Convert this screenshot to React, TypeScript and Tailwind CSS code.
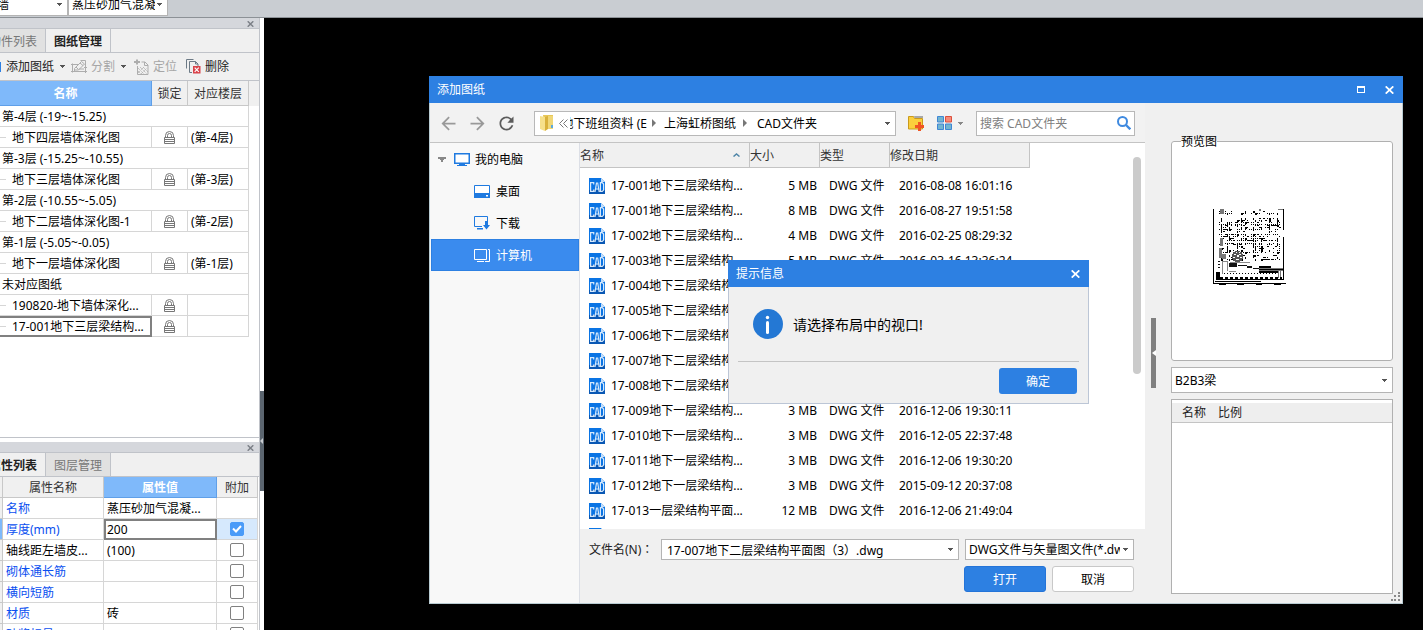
import React from "react";
import { MdArrowBack, MdArrowForward, MdRefresh } from "react-icons/md";

type IconProps = { className?: string };

function Caret({ className = "text-[#555]" }: IconProps) {
  return (
    <svg className={"shrink-0 " + className} width="5" height="3" viewBox="0 0 5 3" fill="currentColor" shapeRendering="crispEdges" aria-hidden="true">
      <path d="M0 0h5v1H0zM1 1h3v1H1zM2 2h1v1H2z" />
    </svg>
  );
}

function Chevron() {
  return (
    <svg className="shrink-0" width="4" height="8" viewBox="0 0 4 8" fill="#777" aria-hidden="true">
      <path d="M0 0l4 4-4 4z" />
    </svg>
  );
}

function SmallClose() {
  return (
    <svg width="7" height="6" viewBox="0 0 7 6" stroke="#7c8087" strokeWidth="1.5" aria-hidden="true">
      <path d="M.7 .3L6.3 5.7M6.3 .3L.7 5.7" />
    </svg>
  );
}

function CloseIcon() {
  return (
    <svg width="9" height="8" viewBox="0 0 9 8" stroke="#fff" strokeWidth="1.8" aria-hidden="true">
      <path d="M.7 .4l7.6 7.2M8.3 .4L.7 7.6" />
    </svg>
  );
}

function LockIcon() {
  return (
    <svg className="mx-auto block" width="11" height="13" viewBox="0 0 11 13" fill="none" stroke="#777" aria-hidden="true">
      <path d="M1.500 6V4.500A4 4 0 0 1 5.500 .5A4 4 0 0 1 9.500 4.500V6M3.500 6V4.500A2 2 0 0 1 7.500 4.500V6" />
      <path d="M.5 6.500h10v6H.5zM.5 8.500h10M.5 10.500h10" />
    </svg>
  );
}

function SplitIcon() {
  return (
    <svg width="16" height="15" viewBox="0 0 16 15" fill="none" stroke="#adadad" aria-hidden="true">
      <path d="M1.500 4.500v9M0 12.500h16M14.500 4v10M1 5.500h6M3.500 9.500l7-7 3 2.500-6 6h-4zM5 8l2.500 2.500M9 4l3 2.500M9.500 1.500h5v3" />
      <path d="M3.500 10v2M8 10h5M0 5.500h2M13 8.500h3" />
    </svg>
  );
}

function LocateIcon() {
  return (
    <svg width="15" height="16" viewBox="0 0 15 16" fill="none" stroke="#adadad" aria-hidden="true">
      <path d="M3 .5v5M0 3h6" strokeWidth="2" />
      <path d="M3.500 7v8.500h10.500V6l-3-3H7.500M10.500 3v3.500H14" />
      <path d="M4 9l6 6M4 12l3 3M6 8l7 7M9 8l5 5M4 14l6-6M7 15l6-6" strokeDasharray="1 1" />
    </svg>
  );
}

function DeleteIcon() {
  return (
    <svg width="15" height="15" viewBox="0 0 15 15" fill="none" stroke="#6c7a86" aria-hidden="true">
      <path d="M.5 9.500V.5h7M6 13.500H3.500V2.500h6l2.500 2.500v2M9.500 2.500V5H12" />
      <path d="M7 7h7.500v7.500H7z" fill="#d9434a" stroke="none" />
      <path d="M8.700 8.700l4.100 4.100M12.800 8.700l-4.100 4.100" stroke="#fff" strokeWidth="1.200" />
    </svg>
  );
}

function ComputerIcon() {
  return (
    <svg width="16" height="13" viewBox="0 0 16 13" aria-hidden="true">
      <path d="M.75 .75h14.500v9.500H.75z" fill="#fff" stroke="#1f7ae0" strokeWidth="1.500" />
      <path d="M5 11h6v1h2v1H3v-1h2z" fill="#1f7ae0" />
    </svg>
  );
}

function DesktopIcon() {
  return (
    <svg width="16" height="13" viewBox="0 0 16 13" aria-hidden="true">
      <path d="M.5 .5h15v12H.5z" fill="#fff" stroke="#1f7ae0" />
      <path d="M0 8h16v5H0z" fill="#1f7ae0" />
      <path d="M12 10h2v1.500h-2z" fill="#fff" />
    </svg>
  );
}

function DownloadIcon() {
  return (
    <svg width="16" height="14" viewBox="0 0 16 14" aria-hidden="true">
      <path d="M8 10.500H.5V.5h13V5" fill="none" stroke="#1f7ae0" />
      <path d="M3 12h6v1.500H3zM11 5h3v4h2l-3.500 4.500L9 9h2z" fill="#1f7ae0" />
    </svg>
  );
}

function MachineIcon() {
  return (
    <svg width="16" height="13" viewBox="0 0 16 13" fill="none" stroke="#fff" aria-hidden="true">
      <path d="M.5 .5h12v10H.5zM14 .5h1.500v12H11M3 12.500h7" />
    </svg>
  );
}

function FolderIcon() {
  return (
    <svg width="14" height="16" viewBox="0 0 14 16" aria-hidden="true">
      <path d="M3 0h10v14H5z" fill="#e8c757" />
      <path d="M0 1l5 1v14l-5-2z" fill="#f6e08a" />
      <path d="M5 2l3-1v13l-3 2z" fill="#d9b13b" />
      <path d="M8 1h5v13H8z" fill="#f0d778" />
      <path d="M11 10h2v3h-2z" fill="#5aa9dc" />
    </svg>
  );
}

function NewFolderIcon() {
  return (
    <svg width="16" height="15" viewBox="0 0 16 15" aria-hidden="true">
      <path d="M.5 .5h5l1 2h8v10.500H.5z" fill="#fbcf3c" stroke="#c99a1c" />
      <path d="M6 0h9v2H6.500z" fill="#a8a8a8" />
      <path d="M10 6h3v3h3v3h-3v3h-3v-3H7V9h3z" fill="#f05423" />
    </svg>
  );
}

function ViewIcon() {
  return (
    <svg width="15" height="14" viewBox="0 0 15 14" aria-hidden="true">
      <g fill="#72b5cf" stroke="#3f86d4">
        <path d="M.5 .5h6v5.500h-6zM.5 8h6v5.500h-6zM8.500 8h6v5.500h-6z" />
      </g>
      <path d="M8.500 .5h6v5.500h-6z" fill="#f58b7a" stroke="#dc4f3c" />
    </svg>
  );
}

function SearchIcon() {
  return (
    <svg width="14" height="14" viewBox="0 0 14 14" fill="none" stroke="#3f8ae0" aria-hidden="true">
      <circle cx="5.500" cy="5.500" r="4.500" strokeWidth="2" />
      <path d="M9 9l4.300 4.300" strokeWidth="2.400" />
    </svg>
  );
}

function CadIcon() {
  return (
    <svg className="block" width="16" height="16" viewBox="0 0 16 16" fill="none" aria-hidden="true">
      <path d="M0 0h12l4 4v12H0z" fill="#0a74e4" />
      <path d="M0 12h16v4H0z" fill="#0a58b4" />
      <path d="M12 0l4 4h-4z" fill="#c3defa" />
      <g stroke="#d6e9fc" strokeWidth="1.200">
        <path d="M4.700 6.500V4.600H1.600v8.800h3.100v-2M6 14l1.500-9h1.200l1.500 9M6.500 11h3.200M11.400 4.600h1.800l1.400 1.500v6l-1.400 1.300h-1.800z" />
      </g>
    </svg>
  );
}

function InfoIcon() {
  return (
    <svg className="shrink-0" width="30" height="30" viewBox="0 0 30 30" aria-hidden="true">
      <circle cx="15" cy="15" r="15" fill="#2478d4" />
      <circle cx="14.500" cy="8.500" r="1.700" fill="#fff" />
      <path d="M14.500 13.500v10" stroke="#fff" strokeWidth="3" strokeLinecap="round" />
    </svg>
  );
}

/* Thumbnail of the selected drawing: a grid of beams inside a sheet frame.
   Each pair is [y, density out of 12]. */
const beamRows: [number, number][] = [
  [2, 5], [4, 6], [9, 4], [11, 4], [13, 8], [15, 10], [16, 5], [18, 6], [20, 9], [22, 4], [25, 10],
  [27, 8], [29, 7], [31, 9], [34, 10], [35, 6], [37, 5], [39, 6], [41, 8], [43, 9], [46, 4], [48, 5], [50, 6],
];

function beamPath(): string {
  let d = "";
  let seed = 7;
  for (const [y, density] of beamRows) {
    for (let x = 6; x < 67; x += 2) {
      seed = (seed * 16807) % 2147483647;
      const value = (seed / 2147483647) * 12;
      const onAxis = x % 8 === 0 || x % 14 === 0;
      if (value < density * (onAxis ? 1.2 : 0.8)) {
        const w = value < 1.5 ? 2 : 1;
        const h = onAxis && value < 5 ? 2 : 1;
        d += "M" + x + " " + y + "h" + w + "v" + h + "h-" + w + "z";
      }
    }
  }
  return d;
}

function DrawingPreview() {
  return (
    <svg width="73" height="76" viewBox="0 0 73 76" shapeRendering="crispEdges" role="img" aria-label="预览图">
      <path d={beamPath()} fill="#000" />
      <path d="M7 0h4v5H7zM46 0h2v2h-2zM65 0h5v1h-5zM7 29h3v8H7zM6 39h3v10H6zM9 45h4v5H9z" fill="#777" />
      <path d="M8 52h62v15H8z" fill="#fff" />
      <path d="M22 42h5v1h2v2h1v5h-1v2h-2v1h-5v-1h-2v-2h-1v-5h1v-2h2z" fill="#555" />
      <path d="M23 43h1v1h-1zM26 43h1v1h-1zM21 45h2v1h-2zM26 45h2v1h-2zM24 46h2v2h-2zM20 48h2v1h-2zM27 48h2v1h-2zM23 50h3v1h-3z" fill="#fff" />
      <path d="M9.500 52v12.500M14.500 52v10M9 52.500h6M17 53.500h20M23 62.500h-7" stroke="#888" fill="none" />
      <path d="M16 54h8v4h-8zM25 56h9v1h-9zM34 57h5v2h-5zM40 59h6v1h-6zM5 52h2v1H5zM5 55h2v1H5zM5 58h2v1H5z" fill="#111" />
      <path d="M46 57h12v2H46zM46 60h24v1H46zM46 62h20v2H46z" fill="#000" />
      <path d="M58 59h12v1H58zM46 59h12v1H46zM46 61h24v1H46zM65 62h1v7h-1zM67 62h1v7h-1z" fill="#777" />
      <path d="M11 64.500h54" stroke="#000" strokeDasharray="1 2" />
      <path d="M0 0h1v75H0zM70 0h1v21h-1zM70 28h1v43h-1zM0 74h73v1H0zM2 72h46v1H2zM3 63h4v8H3zM5 70h66v1H5z" fill="#000" />
      <path d="M7 69h62" stroke="#000" strokeWidth="2" strokeDasharray="3 2" />
      <path d="M6 75h7v1H6zM24 75h7v1h-7zM43 75h6v1h-6zM61 75h7v1h-7z" fill="#000" />
    </svg>
  );
}

type SelectProps = { label: string; value: string; className: string; textClass: string };

function SelectBox({ label, value, className, textClass }: SelectProps) {
  return (
    <label className={"relative flex items-center border border-[#b4b4b4] bg-white " + className}>
      <select aria-label={label} className={"h-full w-full appearance-none overflow-hidden bg-transparent text-black outline-none " + textClass}>
        <option>{value}</option>
      </select>
      <span className="pointer-events-none absolute right-[5px]">
        <Caret />
      </span>
    </label>
  );
}

type Drawing = { name: string; floor?: string; group?: boolean; selected?: boolean };

const drawings: Drawing[] = [
  { name: "第-4层 (-19~-15.25)", group: true },
  { name: "地下四层墙体深化图", floor: "(第-4层)" },
  { name: "第-3层 (-15.25~-10.55)", group: true },
  { name: "地下三层墙体深化图", floor: "(第-3层)" },
  { name: "第-2层 (-10.55~-5.05)", group: true },
  { name: "地下二层墙体深化图-1", floor: "(第-2层)" },
  { name: "第-1层 (-5.05~-0.05)", group: true },
  { name: "地下一层墙体深化图", floor: "(第-1层)" },
  { name: "未对应图纸", group: true },
  { name: "190820-地下墙体深化..." },
  { name: "17-001地下三层梁结构...", selected: true },
];

type Property = { name: string; value: string; checked?: boolean; plain?: boolean; noCheck?: boolean };

const properties: Property[] = [
  { name: "名称", value: "蒸压砂加气混凝...", noCheck: true },
  { name: "厚度(mm)", value: "200", checked: true },
  { name: "轴线距左墙皮...", value: "(100)", plain: true },
  { name: "砌体通长筋", value: "" },
  { name: "横向短筋", value: "" },
  { name: "材质", value: "砖" },
  { name: "砂浆标号", value: "" },
];

const files = [
  ["17-001地下三层梁结构...", "5 MB", "2016-08-08 16:01:16"],
  ["17-001地下三层梁结构...", "8 MB", "2016-08-27 19:51:58"],
  ["17-002地下三层梁结构...", "4 MB", "2016-02-25 08:29:32"],
  ["17-003地下三层梁结构...", "5 MB", "2016-03-16 13:36:24"],
  ["17-004地下三层梁结构...", "", ""],
  ["17-005地下二层梁结构...", "", ""],
  ["17-006地下二层梁结构...", "", ""],
  ["17-007地下二层梁结构...", "", ""],
  ["17-008地下二层梁结构...", "", ""],
  ["17-009地下一层梁结构...", "3 MB", "2016-12-06 19:30:11"],
  ["17-010地下一层梁结构...", "3 MB", "2016-12-05 22:37:48"],
  ["17-011地下一层梁结构...", "3 MB", "2016-12-06 19:30:20"],
  ["17-012地下一层梁结构...", "3 MB", "2015-09-12 20:37:08"],
  ["17-013一层梁结构平面...", "12 MB", "2016-12-06 21:49:04"],
  ["", "", ""],
];

function DockHeader() {
  return (
    <div className="flex h-[11px] shrink-0 items-end justify-end border-b border-[#c0c3c9] bg-[#d5d7dc] pr-[5px]">
      <button type="button" aria-label="关闭面板" className="flex h-2 items-center">
        <SmallClose />
      </button>
    </div>
  );
}

type TabsProps = { first: string; second: string; active: 0 | 1 };

function DockTabs({ first, second, active }: TabsProps) {
  const on = "bg-[#f0f0f0] font-bold text-[#222]";
  const off = "bg-[#e1e1e1] text-[#777]";
  return (
    <div className="flex h-6 shrink-0 border-b border-[#c0c3c9] bg-[#f0f0f0]" role="tablist">
      <button type="button" role="tab" aria-selected={active === 0} className={"flex w-[46px] items-center justify-end overflow-hidden whitespace-nowrap border-r border-[#c0c3c9] pr-2 pt-px " + (active === 0 ? on : off)}>
        {first}
      </button>
      <button type="button" role="tab" aria-selected={active === 1} className={"flex w-[65px] items-center justify-center whitespace-nowrap border-r border-[#c0c3c9] pt-px " + (active === 1 ? on : off)}>
        {second}
      </button>
    </div>
  );
}

function DrawingsPanel() {
  return (
    <section className="flex h-[420px] shrink-0 flex-col border-b border-[#c0c3c9]">
      <DockHeader />
      <DockTabs first="构件列表" second="图纸管理" active={1} />
      <div className="flex h-[28px] shrink-0 items-center border-b border-[#c0c3c9] bg-[#f0f0f0] text-[#222]">
        <button type="button" className="flex items-center">
          <span className="h-2.5 w-px bg-[#2d80e2]" />
          <span className="ml-[5px] mr-1.5">添加图纸</span>
          <Caret />
        </button>
        <button type="button" className="ml-1.5 flex items-center text-[#a6a6a6]">
          <SplitIcon />
          <span className="ml-1 mr-1.5">分割</span>
          <Caret />
        </button>
        <button type="button" className="ml-2 flex items-center gap-1 text-[#a6a6a6]">
          <LocateIcon />
          定位
        </button>
        <button type="button" className="ml-[9px] flex items-center gap-1">
          <DeleteIcon />
          删除
        </button>
      </div>
      <table className="w-full table-fixed border-separate border-spacing-0">
        <colgroup>
          <col className="w-[152px]" />
          <col className="w-[36px]" />
          <col className="w-[61px]" />
          <col />
        </colgroup>
        <thead>
          <tr className="h-[25px] bg-[#f0f0f0] text-[#333]">
            <th className="border-b border-r border-[#5f9fe8] bg-[#7fb9fa] pr-5 text-center font-bold text-white">名称</th>
            <th className="border-b border-r border-[#c8c8c8] p-0 text-center font-normal">锁定</th>
            <th className="border-b border-r border-[#c8c8c8] p-0 text-center font-normal">对应楼层</th>
            <td />
          </tr>
        </thead>
        <tbody>
          {drawings.map((d) =>
            d.group ? (
              <tr key={d.name} className="h-[21px]">
                <td colSpan={3} className="border-b border-r border-[#d6d6d6] pl-0.5">{d.name}</td>
                <td />
              </tr>
            ) : (
              <tr key={d.name} className="h-[21px]">
                <td className={"whitespace-nowrap " + (d.selected ? "border-2 border-l-0 border-[#808080]" : "border-b border-r border-[#d6d6d6]")}>
                  <span className="flex items-center gap-1.5">
                    <span className="h-px w-1.5 bg-[#d6d6d6]" />
                    {d.name}
                  </span>
                </td>
                <td className="border-b border-r border-[#d6d6d6]"><LockIcon /></td>
                <td className="border-b border-r border-[#d6d6d6] pl-[3px]">{d.floor}</td>
                <td />
              </tr>
            )
          )}
        </tbody>
      </table>
    </section>
  );
}

function PropertiesPanel() {
  return (
    <section className="mt-1 flex min-h-0 flex-1 flex-col overflow-hidden">
      <DockHeader />
      <DockTabs first="属性列表" second="图层管理" active={0} />
      <div className="min-h-0 flex-1 overflow-hidden">
        <table className="w-[258px] table-fixed border-separate border-spacing-0">
          <colgroup>
            <col className="w-[3px]" />
            <col className="w-[101px]" />
            <col className="w-[113px]" />
            <col />
          </colgroup>
          <thead>
            <tr className="h-[21px] bg-[#f0f0f0] text-[#333]">
              <td className="border-b border-r border-[#c8c8c8]" />
              <th className="border-b border-r border-[#c8c8c8] p-0 text-center font-normal">属性名称</th>
              <th className="border-b border-r border-[#5f9fe8] bg-[#7fb9fa] p-0 text-center font-bold text-white">属性值</th>
              <th className="border-b border-r border-[#c8c8c8] p-0 text-center font-normal">附加</th>
            </tr>
          </thead>
          <tbody>
            {properties.map((p) => (
              <tr key={p.name} className="h-[21px]">
                <td className={"border-b border-r border-[#c8c8c8] " + (p.checked ? "bg-[#7fb9fa]" : "bg-[#f0f0f0]")} />
                <td className={"whitespace-nowrap border-b border-r border-[#d6d6d6] pl-[3px] " + (p.plain ? "text-black" : "text-[#0a4ff0]")}>{p.name}</td>
                <td className={"whitespace-nowrap " + (p.checked ? "border-2 border-[#808080] pl-px" : "border-b border-r border-[#d6d6d6] pl-[3px]")}>{p.value}</td>
                <td className={"border-b border-r border-[#d6d6d6] " + (p.checked ? "bg-[#d6e9fd]" : "")}>
                  {!p.noCheck && (
                    <label className="relative mx-auto flex h-3.5 w-3.5 items-center justify-center">
                      <input type="checkbox" defaultChecked={p.checked} aria-label={p.name} className="peer h-3.5 w-3.5 appearance-none rounded-xs border border-[#808080] bg-white checked:border-[#4a9bf8] checked:bg-[#4a9bf8]" />
                      <svg className="pointer-events-none absolute hidden peer-checked:block" width="10" height="8" viewBox="0 0 10 8" fill="none" stroke="#fff" strokeWidth="2" aria-hidden="true">
                        <path d="M1 3.500l3 3L9 1" />
                      </svg>
                    </label>
                  )}
                </td>
              </tr>
            ))}
          </tbody>
        </table>
      </div>
    </section>
  );
}

function PlacesNav() {
  const item = "flex h-8 w-full items-center gap-1.5 pl-[43px]";
  return (
    <nav className="w-[150px] shrink-0 border-r border-[#dcdfe6] bg-[#f8f8f8] pl-px text-black">
      <button type="button" className="flex h-8 w-full items-center pl-[7px]">
        <Caret className="h-[5px] w-2 text-[#888]" />
        <span className="ml-2 mr-[5px]"><ComputerIcon /></span>
        我的电脑
      </button>
      <button type="button" className={item}><DesktopIcon />桌面</button>
      <button type="button" className={item}><DownloadIcon />下载</button>
      <button type="button" className={item + " bg-[#3a8bee] text-white inset-ring inset-ring-[#2d80e2]"}><MachineIcon />计算机</button>
    </nav>
  );
}

function FileList() {
  const head = "border-b border-r border-[#c4c4c4] bg-[#f0f0f0] p-0 text-left font-normal text-[#333]";
  return (
    <div className="flex min-h-0 flex-1 justify-between overflow-hidden bg-white">
      <table className="w-[450px] table-fixed self-start border-separate border-spacing-0">
        <colgroup>
          <col className="w-[170px]" />
          <col className="w-[70px]" />
          <col className="w-[70px]" />
          <col className="w-[140px]" />
        </colgroup>
        <thead>
          <tr className="h-[25px]">
            <th className={head}>
              <span className="flex items-center justify-between pr-[9px]">
                名称
                <svg width="7" height="4" viewBox="0 0 7 4" fill="none" stroke="#4f86a8" strokeWidth="1.500" aria-hidden="true"><path d="M.5 3.500l3-2.500 3 2.500" /></svg>
              </span>
            </th>
            <th className={head}>大小</th>
            <th className={head}>类型</th>
            <th className={head}>修改日期</th>
          </tr>
        </thead>
        <tbody className="before:block before:h-[5px] before:content-['']">
          {files.map((f, i) => (
            <tr key={i} className="h-[25px] whitespace-nowrap">
              <td className="p-0 pl-[9px]">
                <span className="flex items-center gap-1.5"><CadIcon />{f[0]}</span>
              </td>
              <td className="p-0 pr-[3px] text-right">{f[1]}</td>
              <td className="p-0 pl-[9px]">{f[1] && "DWG 文件"}</td>
              <td className="p-0 pl-[9px]">{f[2]}</td>
            </tr>
          ))}
        </tbody>
      </table>
      <div className="mr-1 mt-3.5 h-[217px] w-2 rounded-full bg-[#cbcbcb]" />
    </div>
  );
}

function DialogToolbar() {
  return (
    <div className="flex h-10 shrink-0 items-center border-b border-[#c4c4c4] bg-[#f2f2f2] pl-2 pt-px">
      <div className="flex gap-2 text-[#999]">
        <button type="button" aria-label="后退"><MdArrowBack size={21} /></button>
        <button type="button" aria-label="前进"><MdArrowForward size={21} /></button>
        <button type="button" aria-label="刷新" className="text-[#5c5c5c]"><MdRefresh size={21} /></button>
      </div>
      <div className="ml-[17px] flex h-[25px] min-w-0 flex-1 items-center border border-[#b8b8b8] bg-white pl-[5px] pr-[5px] text-black">
        <FolderIcon />
        <svg className="ml-[5px] shrink-0" width="9" height="9" viewBox="0 0 9 9" fill="none" stroke="#777" aria-hidden="true">
          <path d="M4.500 .5l-4 4 4 4M8.500 .5l-4 4 4 4" />
        </svg>
        <span className="ml-0.5 flex w-[77px] justify-end overflow-hidden whitespace-nowrap">地下班组资料 (E</span>
        <span className="ml-[5px]"><Chevron /></span>
        <span className="ml-2 whitespace-nowrap">上海虹桥图纸</span>
        <span className="ml-[7px]"><Chevron /></span>
        <span className="ml-[10px] flex-1 whitespace-nowrap">CAD文件夹</span>
        <Caret />
      </div>
      <button type="button" aria-label="新建文件夹" className="ml-3"><NewFolderIcon /></button>
      <button type="button" aria-label="视图" className="ml-[13px] flex items-center gap-1.5"><ViewIcon /><Caret className="text-[#888]" /></button>
      <label className="ml-[13px] mr-[10px] flex h-[25px] w-[159px] items-center border border-[#b8b8b8] bg-white pl-[3px] pr-[3px]">
        <input type="text" aria-label="搜索" placeholder="搜索 CAD文件夹" className="min-w-0 flex-1 bg-transparent outline-none placeholder:text-[#808080]" />
        <SearchIcon />
      </label>
    </div>
  );
}

function DialogFooter() {
  return (
    <div className="h-[74px] shrink-0 pl-[9px] pr-[11px] pt-2.5">
      <div className="flex items-center">
        <label htmlFor="file-name" className="w-[72px] whitespace-nowrap text-[#222]">
          文件名(N)<span className="font-['Noto_Sans_CJK_TC',sans-serif] leading-4">：</span>
        </label>
        <div className="relative flex h-[21px] min-w-0 flex-1 items-center border border-[#b4b4b4] bg-white">
          <input id="file-name" type="text" defaultValue="17-007地下二层梁结构平面图（3）.dwg" className="h-full w-full bg-transparent pl-[5px] text-black outline-none" />
          <span className="absolute right-[5px]"><Caret /></span>
        </div>
        <SelectBox label="文件类型" value="DWG文件与矢量图文件(*.dwg)" className="ml-[6px] h-[21px] w-[169px]" textClass="pl-[3px] pr-[13px]" />
      </div>
      <div className="mt-1.5 flex justify-end gap-1.5">
        <button type="button" className="h-[26px] w-[82px] rounded-[3px] border border-[#2474d8] bg-[#2d80e2] pt-px text-white">打开</button>
        <button type="button" className="h-[26px] w-[82px] rounded-[3px] border border-[#c8c8c8] bg-white pt-px text-black">取消</button>
      </div>
    </div>
  );
}

function PreviewPane() {
  return (
    <aside className="relative flex w-[257px] shrink-0 bg-[#f0f0f0] pb-[9px] pl-1.5 pr-[9px] pt-[30px]">
      <button type="button" aria-label="折叠预览" className="mt-[185px] flex h-[70px] w-[5px] items-center justify-center bg-[#808080]">
        <svg width="4" height="6" viewBox="0 0 4 6" fill="#fff" aria-hidden="true"><path d="M4 0v6L0 3z" /></svg>
      </button>
      <div className="ml-[15px] flex min-w-0 flex-1 flex-col gap-1.5">
        <fieldset className="h-[228px] rounded-[3px] border border-[#b0b0b0] bg-white pl-[9px]">
          <legend className="h-4 text-black">预览图</legend>
          <div className="pl-8 pt-[60px]"><DrawingPreview /></div>
        </fieldset>
        <SelectBox label="布局" value="B2B3梁" className="h-[26px]" textClass="pl-[3px] pt-px" />
        <div className="flex-1 border border-[#b0b0b0] bg-white pt-[3px]">
          <div className="flex h-5 items-center gap-3 border-b border-[#c4c4c4] bg-[#eeeeee] pl-[10px] text-[#222]">
            <span>名称</span>
            <span>比例</span>
          </div>
        </div>
      </div>
      <svg className="absolute bottom-0.5 right-0.5" width="9" height="9" viewBox="0 0 9 9" fill="#888" shapeRendering="crispEdges" aria-hidden="true">
        <path d="M7 0h2v2H7zM7 3h2v2H7zM7 7h2v2H7zM3 3h2v2H3zM3 7h2v2H3zM0 7h2v2H0z" />
      </svg>
    </aside>
  );
}

function MessageBox() {
  return (
    <div role="alertdialog" aria-labelledby="message-title" className="absolute left-[298px] top-[184px] w-[361px] border border-t-0 border-[#bcc6d6] bg-[#f0f0f0]">
      <div className="-mx-px flex h-[27px] items-center justify-between bg-[#2d80e2] pl-2 pr-[9px] text-white">
        <h2 id="message-title">提示信息</h2>
        <button type="button" aria-label="关闭"><CloseIcon /></button>
      </div>
      <div className="mx-[9px] flex h-[75px] items-center gap-2.5 border-b border-[#c4c4c4] pl-[15px] text-[14px] text-black">
        <InfoIcon />
        请选择布局中的视口!
      </div>
      <div className="flex justify-end pb-[9px] pr-[11px] pt-1.5">
        <button type="button" className="h-[26px] w-[78px] rounded-[3px] bg-[#2d80e2] pt-px text-white">确定</button>
      </div>
    </div>
  );
}

function AddDrawingDialog() {
  return (
    <div role="dialog" aria-labelledby="dialog-title" className="relative flex h-full w-full flex-col border border-t-0 border-[#b9cbd2] bg-[#f0f0f0]">
      <div className="-mx-px flex h-[27px] shrink-0 items-center bg-[#2d80e2] pl-2 pr-[9px] text-white">
        <h1 id="dialog-title" className="flex-1">添加图纸</h1>
        <button type="button" aria-label="最大化">
          <svg width="8" height="7" viewBox="0 0 8 7" fill="#fff" shapeRendering="crispEdges" aria-hidden="true"><path d="M0 0h8v7H0zM1 2v4h6V2z" fillRule="evenodd" /></svg>
        </button>
        <button type="button" aria-label="关闭" className="ml-5"><CloseIcon /></button>
      </div>
      <div className="flex min-h-0 flex-1">
        <div className="flex min-w-0 flex-1 flex-col">
          <DialogToolbar />
          <div className="flex min-h-0 flex-1">
            <PlacesNav />
            <div className="flex min-w-0 flex-1 flex-col">
              <FileList />
              <DialogFooter />
            </div>
          </div>
        </div>
        <PreviewPane />
      </div>
      <MessageBox />
    </div>
  );
}

export default function App() {
  return (
    <div className="flex h-screen flex-col overflow-hidden bg-black font-['Noto_Sans','Noto_Sans_CJK_SC',sans-serif] text-[12px] leading-[17px] text-black">
      <header className="flex h-[18px] shrink-0 items-end overflow-hidden border-b border-[#8c9196] bg-[#c9cdd2] pb-px">
        <SelectBox label="构件" value="墙" className="-ml-[8px] h-[23px] w-[76px]" textClass="pl-1" />
        <SelectBox label="类型" value="蒸压砂加气混凝土" className="h-[23px] w-[100px]" textClass="pl-[3px] pr-[12px]" />
      </header>
      <div className="flex min-h-0 flex-1">
        <div className="flex w-[264px] shrink-0 bg-white">
          <div className="flex w-[260px] flex-col border-r border-[#c0c3c9]">
            <DrawingsPanel />
            <PropertiesPanel />
          </div>
          <button type="button" aria-label="折叠面板" className="mt-[373px] flex h-[100px] w-1 items-center bg-[#5b656f]">
            <svg width="3" height="6" viewBox="0 0 3 6" fill="#c8ccd0" aria-hidden="true"><path d="M3 0v6L0 3z" /></svg>
          </button>
        </div>
        <main className="min-w-0 flex-1 pb-[26px] pl-[165px] pr-5 pt-[58px]">
          <AddDrawingDialog />
        </main>
      </div>
    </div>
  );
}
